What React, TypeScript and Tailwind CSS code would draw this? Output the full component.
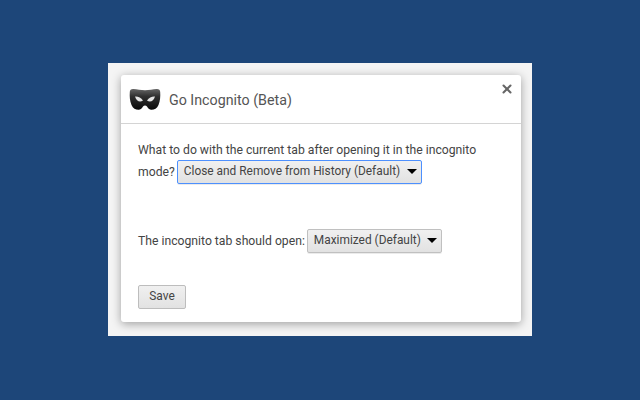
import { X } from "lucide-react";

const mask =
  "M0.8 4C0.8 2 2.2 0.8 4.5 1C8 1.4 12 2.2 16 2.2C20 2.2 24 1.4 27.5 1C29.8 0.8 31.2 2 31.2 4C31.5 8 31.2 13 29.5 17C28 20.5 25 22 22 21.8C19.8 21.6 18.8 20 18 18.6C17 17.2 15 17.2 14 18.6C13.2 20 12.2 21.6 10 21.8C7 22 4 20.5 2.5 17C0.8 13 0.5 8 0.8 4Z";

function MaskIcon() {
  return (
    <svg width="32" height="23" viewBox="0 0 32 23" aria-hidden="true">
      <defs>
        <linearGradient id="maskFill" x1="0" y1="0" x2="0" y2="1">
          <stop offset="0" stopColor="#666666" />
          <stop offset="0.35" stopColor="#303030" />
          <stop offset="1" stopColor="#0a0a0a" />
        </linearGradient>
      </defs>
      <path d={mask} fill="url(#maskFill)" />
      <path d="M6 8.5C8.5 8 12 9.5 14 12.5C11 14.5 7.5 13.5 6 8.5Z" fill="#e4e4e4" />
      <path d="M26 8.5C23.5 8 20 9.5 18 12.5C21 14.5 24.5 13.5 26 8.5Z" fill="#e4e4e4" />
    </svg>
  );
}

function FakeSelect({ label, focused }: { label: string; focused?: boolean }) {
  return (
    <span
      className={`flex h-6 shrink-0 items-center justify-between whitespace-nowrap rounded-[2px] border bg-gradient-to-b from-[#f0f0f0] to-[#e2e2e2] pl-[6px] pr-[4px] text-[11.9px] text-[#444] shadow-[0_1px_0_rgba(0,0,0,0.08)] ${
        focused ? "w-[245px] border-[#4d90fe]" : "w-[135px] border-[#c0c0c0]"
      }`}
    >
      {label}
      <span className="mb-[2px] h-0 w-0 border-x-[5px] border-t-[5px] border-x-transparent border-t-black" />
    </span>
  );
}

export default function App() {
  return (
    <div
      className="flex h-[400px] w-[640px] items-center justify-center bg-[#1d4679] text-[12.2px] text-[#444]"
      style={{ fontFamily: 'Roboto, "Open Sans", sans-serif' }}
    >
      <div className="mb-px h-[273px] w-[424px] bg-[#f4f4f4] pl-[13px] pt-3">
        <div className="flex h-[247px] w-[400px] flex-col rounded-[3px] bg-white shadow-[0_2px_10px_rgba(0,0,0,0.35)]">
          <header className="flex h-[49px] shrink-0 items-start border-b border-[#d4d4d4] pl-2">
            <div className="mt-[12px] flex items-center gap-[8px]">
              <MaskIcon />
              <h1 className="pt-[3px] text-[14.25px] font-normal text-[#555]">Go Incognito (Beta)</h1>
            </div>
            <X className="ml-auto mr-[7px] mt-[7px] h-[14px] w-[14px] text-[#666]" strokeWidth={3.5} />
          </header>

          <div className="flex flex-1 flex-col items-start pl-[17px] pt-[16px]">
            <p className="h-[20px] leading-[20px] whitespace-nowrap">
              What to do with the current tab after opening it in the incognito
            </p>
            <div className="flex items-center gap-[2px]">
              mode? <FakeSelect label="Close and Remove from History (Default)" focused />
            </div>
            <div className="mt-[45px] flex items-center gap-[2px]">
              The incognito tab should open: <FakeSelect label="Maximized (Default)" />
            </div>
            <button className="mt-8 h-6 w-12 rounded-[2px] border border-[#bdbdbd] bg-gradient-to-b from-[#f0f0f0] to-[#e2e2e2] text-[11.9px] text-[#444]">
              Save
            </button>
          </div>
        </div>
      </div>
    </div>
  );
}
